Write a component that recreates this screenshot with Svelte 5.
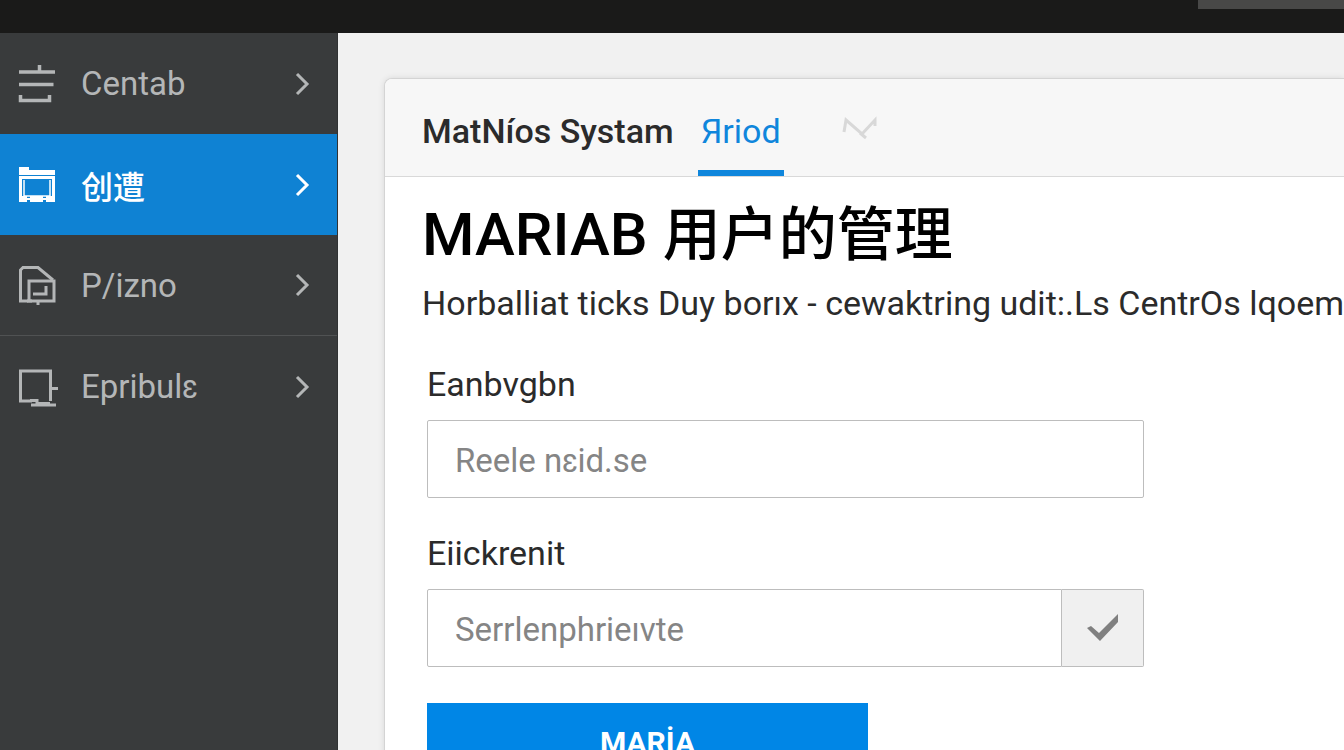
<script lang="ts">
  interface NavItem {
    icon: string;
    label: string;
  }

  const navItems: NavItem[] = [
    { icon: 'list', label: 'Centab' },
    { icon: 'folder', label: '创遭' },
    { icon: 'document', label: 'P/izno' },
    { icon: 'device', label: 'Epribulɛ' },
  ];

  let activeItem = $state('folder');
  let account = $state('');
  let password = $state('');
</script>

<div class="app">
  <header class="topbar">
    <div class="topbar-panel"></div>
  </header>

  <div class="body">
    <nav class="sidebar">
      {#each navItems as item}
        <button
          class="nav-item"
          class:active={activeItem === item.icon}
          onclick={() => (activeItem = item.icon)}
        >
          <svg class="nav-icon" viewBox="0 0 40 40" aria-hidden="true">
            {#if item.icon === 'list'}
              <path d="M1 8H37M21.500 1V8M1 20.500H35.500M2.500 31V36.500H31.500V31" stroke-width="3.500" />
            {:else if item.icon === 'folder'}
              <path d="M1 2H11V5H37V10H1Z" fill="currentColor" stroke="none" />
              <path d="M2.500 11V35M35.500 11V35M1 12.500H37" stroke-width="3" />
              <path d="M6 15V31H32V15" stroke-width="1.500" />
              <path d="M1 31H9V33H12V31H25V33H28V31H37V37H28V35H25V37H12V35H9V37H1Z" fill="currentColor" stroke="none" />
            {:else if item.icon === 'document'}
              <path d="M10 36H2.500V5L5 2.500H20L35 15" stroke-width="3" />
              <rect x="11" y="16" width="25" height="20" stroke-width="3" />
              <path d="M15 29H28V21M20 36V40" stroke-width="3" />
              <path d="M9 36H14" stroke-width="3" />
            {:else}
              <path d="M14 34H2.500V4H32.500V34M33 21.500H40" stroke-width="3" />
              <path d="M12 33.500H19V37M13 38H38M20 36.500H32" stroke-width="3" />
            {/if}
          </svg>
          <span class="nav-label">{item.label}</span>
          <svg class="chevron" viewBox="0 0 16 24" aria-hidden="true">
            <path d="M2 2L12 12L2 22" stroke-width="3" />
          </svg>
        </button>
      {/each}
    </nav>

    <main class="main">
      <section class="card">
        <div class="card-header">
          <span class="card-title">MatNíos Systam</span>
          <button class="tab">Яriod</button>
          <svg class="trend" viewBox="0 0 36 24" aria-hidden="true">
            <path d="M2 16L4 4L20 18L33 4V10M18 17L24 22" />
          </svg>
        </div>

        <div class="card-body">
          <h1>MARIAB <span>用户的管理</span></h1>
          <p class="subtitle">Horballiat ticks Duy borıx - cewaktring udit:.Ls CentrOs lqoem</p>

          <form class="form" onsubmit={(e) => e.preventDefault()}>
            <label for="account">Eanbvgbn</label>
            <input id="account" type="text" placeholder="Reele nɛid.se" bind:value={account} />

            <label for="password">Eiickrenit</label>
            <div class="input-group">
              <input id="password" type="text" placeholder="Serrlenphrieıvte" bind:value={password} />
              <button type="button" class="addon" aria-label="OK">
                <svg viewBox="0 0 32 28" aria-hidden="true">
                  <path d="M0 14L4 12L12 19L31 0V8L13 27Z" />
                </svg>
              </button>
            </div>

            <button type="submit" class="submit">MARİA</button>
          </form>
        </div>
      </section>
    </main>
  </div>
</div>

<style>
  :global(body) {
    background: #f1f1f1;
  }

  .app {
    display: flex;
    flex-direction: column;
    height: 100vh;
    overflow: hidden;
    font-family: Roboto, 'Noto Sans CJK SC', sans-serif;
    font-size: 34px;
    color: #2b2b2b;
  }

  button,
  input {
    font: inherit;
    box-sizing: border-box;
  }

  .topbar {
    display: flex;
    justify-content: flex-end;
    flex: none;
    height: 33px;
    background: #1a1a19;
  }

  .topbar-panel {
    width: 146px;
    height: 9px;
    background: #484847;
  }

  .body {
    display: flex;
    flex: 1;
    min-height: 0;
  }

  .sidebar {
    flex: none;
    width: 338px;
    background: #393b3c;
    border-right: 1px solid #303233;
    box-sizing: border-box;
  }

  .nav-item {
    display: flex;
    align-items: center;
    width: 100%;
    height: 101px;
    padding: 0 26px 0 18px;
    border: 0;
    background: none;
    color: #b4b6b7;
    font-size: 33px;
    text-align: left;
    cursor: pointer;
  }

  .nav-item:nth-child(3) {
    border-bottom: 1px solid #505253;
  }

  .nav-item.active {
    background: #0f82d3;
    color: #fff;
    font-size: 32px;
    font-weight: 500;
  }

  .nav-item svg {
    flex: none;
    fill: none;
    stroke: currentColor;
  }

  .nav-icon {
    width: 40px;
    height: 40px;
  }

  .nav-label {
    flex: 1;
    margin-left: 23px;
  }

  .chevron {
    width: 16px;
    height: 24px;
  }

  .main {
    flex: 1;
    min-width: 0;
    padding: 45px 0 0 46px;
    overflow: hidden;
  }

  .card {
    min-height: 800px;
    border: 1px solid #d4d4d4;
    border-right: 0;
    border-radius: 8px 0 0 0;
    background: #fff;
    box-shadow: 0 0 6px rgba(0, 0, 0, 0.1);
    overflow: hidden;
  }

  .card-header {
    display: flex;
    align-items: center;
    height: 97px;
    padding-left: 37px;
    background: #f7f7f7;
    border-bottom: 1px solid #d9d9d9;
  }

  .card-title {
    padding-top: 6px;
    font-weight: 500;
    white-space: nowrap;
  }

  .tab {
    align-self: stretch;
    margin-left: 24px;
    padding: 12px 3px 0;
    border: 0;
    border-bottom: 6px solid #0f86dc;
    background: none;
    color: #0f86dc;
    cursor: pointer;
  }

  .trend {
    width: 36px;
    height: 24px;
    margin-left: 58px;
    fill: none;
    stroke: #d8d8d8;
    stroke-width: 3;
  }

  .card-body {
    padding-left: 37px;
  }

  h1 {
    margin: 16px 0 0;
    font-size: 60px;
    font-weight: 500;
    line-height: 84px;
    color: #000;
    white-space: nowrap;
  }

  h1 span {
    font-size: 58px;
  }

  .subtitle {
    margin: 2px 0 0;
    line-height: 48px;
    white-space: nowrap;
  }

  .form {
    display: flex;
    flex-direction: column;
    max-width: 717px;
    padding: 33px 5px 0;
  }

  label {
    line-height: 48px;
    margin-bottom: 12px;
  }

  input {
    width: 100%;
    height: 78px;
    margin-bottom: 31px;
    padding: 2px 27px 0;
    border: 1px solid #bdbdbd;
    border-radius: 2px;
    background: #fff;
    color: #333;
    font-size: 33px;
  }

  input::placeholder {
    color: #858585;
    opacity: 1;
  }

  .input-group {
    display: flex;
    height: 78px;
    margin-bottom: 36px;
  }

  .input-group input {
    flex: 1;
    min-width: 0;
    margin: 0;
    border-radius: 2px 0 0 2px;
  }

  .addon {
    display: flex;
    align-items: center;
    justify-content: center;
    width: 82px;
    border: 1px solid #bdbdbd;
    border-left: 0;
    border-radius: 0 2px 2px 0;
    background: #f0f0f0;
    padding: 0;
  }

  .addon svg {
    width: 32px;
    height: 28px;
    fill: #808080;
  }

  .submit {
    width: 441px;
    height: 78px;
    border: 0;
    background: #0086e6;
    color: #fff;
    font-size: 30px;
    font-weight: 700;
  }
</style>
